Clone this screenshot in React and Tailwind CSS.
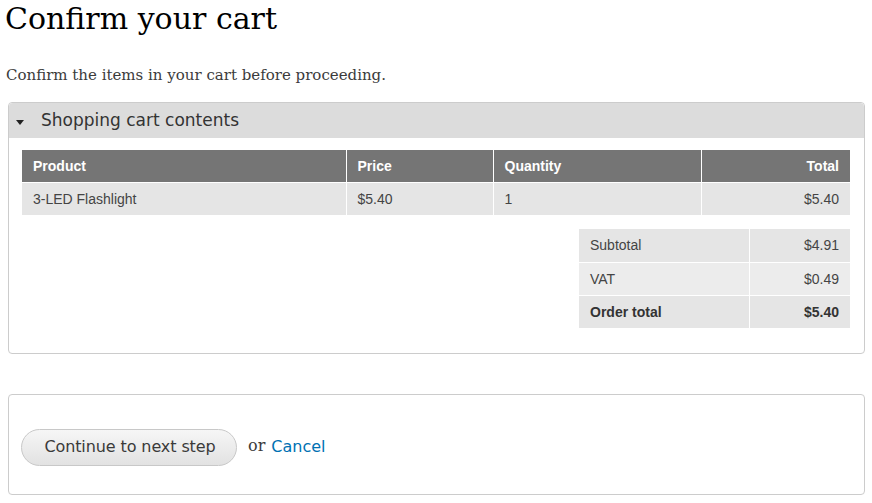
import React from 'react';

const serif = { fontFamily: '"DejaVu Serif", Georgia, serif' };
const sans = { fontFamily: '"DejaVu Sans", "Open Sans", sans-serif' };

const Cell = ({ children, className = '' }) => (
  <td className={`px-[11px] pt-[1px] border-white ${className}`}>{children}</td>
);

export default function App() {
  return (
    <div className="bg-white w-[872px] h-[503px] overflow-hidden text-[#333]">
      <h1 className="text-[#000] text-[30px] leading-[38px] pl-[5px] font-normal" style={serif}>Confirm your cart</h1>
      <p className="text-[#3b3b3b] text-[15px] leading-[20px] pl-[6px] mt-[27px]" style={serif}>Confirm the items in your cart before proceeding.</p>

      <div className="ml-[8px] w-[857px] mt-[17px] border border-[#cccccc] rounded-[4px] pb-[25px]">
        <div className="h-[35px] bg-[#dcdcdc] rounded-t-[4px] flex items-center">
          <svg width="8" height="5" viewBox="0 0 8 5" className="ml-[7px] mt-[3px]"><path d="M0 0h8L4 5z" fill="#222" /></svg>
          <span className="ml-[17px] text-[17px] text-[#333]" style={sans}>Shopping cart contents</span>
        </div>

        <div className="pl-[13px] pt-[12px]" style={{ fontFamily: '"Liberation Sans", Arial, sans-serif' }}>
          <table className="w-[828px] border-collapse text-[14px]">
            <thead>
              <tr className="bg-[#757575] text-white font-bold h-[32px]">
                <Cell className="w-[324px] text-left">Product</Cell>
                <Cell className="w-[147px] border-l text-left">Price</Cell>
                <Cell className="w-[208px] border-l text-left">Quantity</Cell>
                <Cell className="border-l text-right">Total</Cell>
              </tr>
            </thead>
            <tbody>
              <tr className="bg-[#e5e5e5] text-[#444] border-t border-white h-[33px]">
                <Cell>3-LED Flashlight</Cell>
                <Cell className="border-l">$5.40</Cell>
                <Cell className="border-l">1</Cell>
                <Cell className="border-l text-right">$5.40</Cell>
              </tr>
            </tbody>
          </table>

          <div className="flex justify-end w-[828px] mt-[14px]">
            <table className="w-[271px] border-collapse text-[14px] text-[#444]">
              <tbody>
                <tr className="bg-[#e5e5e5] h-[33px]">
                  <Cell className="w-[170px]">Subtotal</Cell>
                  <Cell className="border-l text-right">$4.91</Cell>
                </tr>
                <tr className="bg-[#ececec] border-t border-white h-[33px]">
                  <Cell>VAT</Cell>
                  <Cell className="border-l text-right">$0.49</Cell>
                </tr>
                <tr className="bg-[#e5e5e5] border-t border-white font-bold text-[#333] h-[33px]">
                  <Cell>Order total</Cell>
                  <Cell className="border-l text-right">$5.40</Cell>
                </tr>
              </tbody>
            </table>
          </div>
        </div>
      </div>

      <div className="ml-[8px] w-[857px] mt-[40px] h-[101px] border border-[#cccccc] rounded-[4px] flex items-center pl-[12px] pt-[5px]">
        <button
          className="h-[37px] w-[216px] rounded-full border border-[#c8c8c8] bg-gradient-to-b from-[#f6f6f6] to-[#e2e2e2] text-[#3a3a3a] text-[16px] tracking-[-0.1px] pl-[2px]"
          style={sans}
        >
          Continue to next step
        </button>
        <span className="ml-[11px] text-[16px] text-[#3b3b3b] -mt-[3px]" style={serif}>or</span>
        <a className="ml-[6px] text-[16px] text-[#0071b3]" style={sans}>Cancel</a>
      </div>
    </div>
  );
}
